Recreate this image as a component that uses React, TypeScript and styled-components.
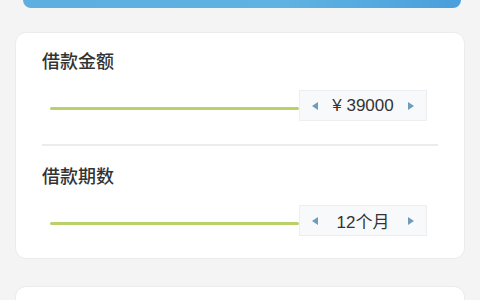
import styled, { createGlobalStyle } from 'styled-components';

const Global = createGlobalStyle`
  html, body {
    margin: 0;
    padding: 0;
    background: #f4f4f4;
    font-family: "Noto Sans CJK SC", "Liberation Sans", sans-serif;
  }
`;

type Item = { title: string; value: string };

const items: Item[] = [
  { title: '借款金额', value: '¥ 39000' },
  { title: '借款期数', value: '12个月' },
];

const App = () => {
  return (
    <Page>
      <Global />
      <Banner />
      <Card>
        {items.map((item, i) => (
          <Section key={item.title} $divider={i < items.length - 1}>
            <Title>{item.title}</Title>
            <SliderRow>
              <Track />
              <Stepper>
                <Arrow $dir="left" />
                <Value>{item.value}</Value>
                <Arrow $dir="right" />
              </Stepper>
            </SliderRow>
          </Section>
        ))}
      </Card>
      <NextCard />
    </Page>
  );
};

// Styled Components
const Page = styled.div`
  width: 480px;
  height: 300px;
  overflow: hidden;
  padding: 0 15px;
  box-sizing: border-box;
`;

const Banner = styled.div`
  height: 8px;
  margin: 0 4px 0 8px;
  border-radius: 0 0 10px 10px;
  background: linear-gradient(90deg, #5daee1 0%, #5eb3e2 60%, #4a9fdc 100%);
`;

const Card = styled.div`
  margin-top: 24px;
  background: #fff;
  border: 1px solid #ececec;
  border-radius: 11px;
  padding: 15px 26px 0 26px;
  box-sizing: border-box;
  height: 227px;
`;

const Section = styled.div<{ $divider: boolean }>`
  padding-bottom: ${(p) => (p.$divider ? '23px' : '0')};
  margin-bottom: ${(p) => (p.$divider ? '17px' : '0')};
  border-bottom: ${(p) => (p.$divider ? '2px solid #ececec' : 'none')};
`;

const Title = styled.div`
  font-size: 18px;
  line-height: 24px;
  color: #333;
  font-weight: 500;
`;

const SliderRow = styled.div`
  display: flex;
  align-items: center;
  margin-top: 18px;
  padding: 0 11px 0 8px;
`;

const Track = styled.div`
  flex: 1;
  height: 3px;
  margin-top: 5px;
  border-radius: 2px;
  background: #b9d06b;
`;

const Stepper = styled.div`
  width: 128px;
  height: 31px;
  box-sizing: border-box;
  display: flex;
  align-items: center;
  justify-content: space-between;
  padding: 0 12px;
  background: #f8f9fa;
  border: 1px solid #eceef0;
`;

const Arrow = styled.span<{ $dir: 'left' | 'right' }>`
  width: 0;
  height: 0;
  border-top: 4.5px solid transparent;
  border-bottom: 4.5px solid transparent;
  ${(p) =>
    p.$dir === 'left'
      ? 'border-right: 6px solid #6f9bbd;'
      : 'border-left: 6px solid #6f9bbd;'}
`;

const Value = styled.span`
  font-size: 17px;
  color: #333;
  font-family: "Liberation Sans", "Noto Sans CJK SC", sans-serif;
`;

const NextCard = styled.div`
  margin-top: 27px;
  height: 40px;
  background: #fff;
  border: 1px solid #ececec;
  border-radius: 11px;
`;

export default App;
